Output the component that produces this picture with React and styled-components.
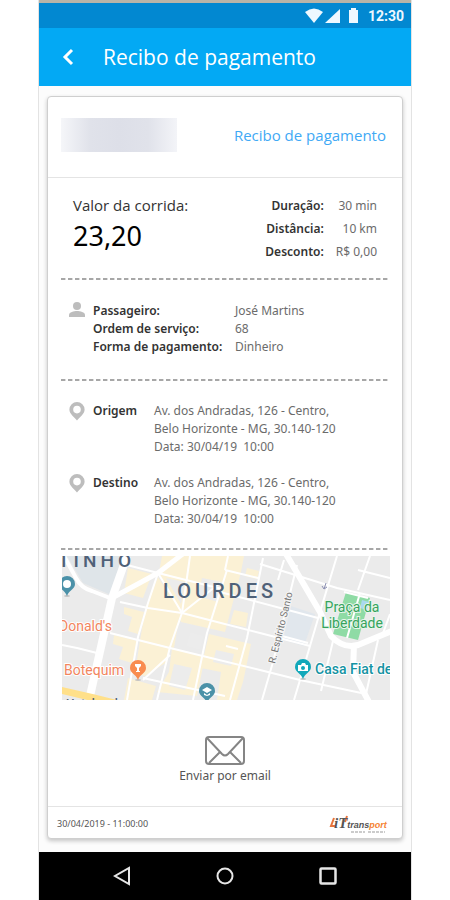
import React from "react";
import styled, { createGlobalStyle } from "styled-components";

const GlobalStyle = createGlobalStyle`
  * {
    box-sizing: border-box;
  }
  body {
    margin: 0;
    background: #ffffff;
    font-family: "Noto Sans", "Open Sans", sans-serif;
  }
  button {
    padding: 0;
    border: 0;
    background: none;
    font: inherit;
    cursor: pointer;
  }
  svg {
    display: block;
  }
`;

const Page = styled.div`
  min-height: 100vh;
  padding: 0 39px;
  display: flex;
`;

const Phone = styled.div`
  flex: 1;
  min-width: 0;
  display: flex;
  flex-direction: column;
  border-top: 3px solid #b9b4a8;
  background: #fcfcfc;
  box-shadow: 0 0 0 1px #e3e3e3;
`;

const StatusBar = styled.div`
  height: 25px;
  padding-right: 7px;
  display: flex;
  align-items: center;
  justify-content: flex-end;
  background: #0288d1;
  color: #eef8ff;
  font: bold 14px/24px Roboto, sans-serif;
`;

const StatusIcons = styled.svg`
  margin-right: 8px;
`;

const AppBar = styled.header`
  height: 58px;
  padding: 0 20px;
  display: flex;
  align-items: center;
  gap: 26px;
  background: #03a9f4;
  color: #ffffff;
`;

const AppTitle = styled.h1`
  margin: 0;
  font-family: "Open Sans", sans-serif;
  font-size: 21px;
  font-weight: 400;
  line-height: 28px;
`;

const BackButton = styled.button`
  width: 18px;
  height: 24px;
  display: flex;
  align-items: center;
  justify-content: center;
`;

const Card = styled.main`
  flex: 1;
  margin: 10px 8px 13px;
  display: flex;
  flex-direction: column;
  background: #ffffff;
  border: 1px solid #cfcfcf;
  border-radius: 4px;
  box-shadow: 0 2px 4px rgba(0, 0, 0, 0.22);
`;

const CardHeader = styled.div`
  height: 81px;
  padding: 0 16px 0 13px;
  display: flex;
  align-items: center;
  justify-content: space-between;
  border-bottom: 1px solid #e4e4e4;
`;

const HiddenName = styled.div`
  width: 116px;
  height: 34px;
  margin-bottom: 4px;
  background: linear-gradient(90deg, #f5f6f9, #e0e2ea 25%, #dddfe8 50%, #e0e2ea 75%, #f3f4f8);
`;

const CardTitle = styled.h2`
  margin: 0 0 4px;
  color: #3fa9f5;
  font-family: "Open Sans", sans-serif;
  font-size: 15px;
  font-weight: 400;
  line-height: 20px;
`;

const Section = styled.section`
  height: ${props => props.$height}px;
  margin: 0 13px;
  padding: ${props => props.$top}px 0 0 8px;
`;

const Divider = styled.svg`
  width: calc(100% - 26px);
  height: 2px;
  margin: 0 13px;
`;

const Summary = styled.div`
  display: flex;
  justify-content: space-between;
  padding: 0 12px 0 4px;
`;

const PriceLabel = styled.div`
  padding-top: 1px;
  color: #333333;
  font-family: "Open Sans", sans-serif;
  font-size: 15px;
  line-height: 20px;
`;

const Price = styled.div`
  color: #000000;
  font-size: 27px;
  line-height: 42px;
`;

const Details = styled.dl`
  margin: 0;
  display: grid;
  grid-template-columns: auto auto;
  column-gap: 12px;
  font-size: 12px;
  line-height: 23px;
  text-align: right;
`;

const Label = styled.dt`
  color: #333333;
  font-weight: 600;
`;

const Value = styled.dd`
  margin: 0;
  color: #6b6b6b;
`;

const IconRow = styled.div`
  display: flex;
  gap: 8px;
  font-size: 12px;
  line-height: 18px;
`;

const RowIcon = styled.svg`
  flex: none;
`;

const Passenger = styled.dl`
  margin: 0;
  display: grid;
  grid-template-columns: 132px auto;
  column-gap: 10px;
`;

const Place = styled(IconRow)`
  margin-bottom: 18px;
`;

const PlaceName = styled.strong`
  width: 53px;
  color: #333333;
  font-weight: 600;
`;

const Address = styled.div`
  color: #6b6b6b;
  white-space: pre-line;
`;

const Map = styled.svg`
  width: calc(100% - 26px);
  height: auto;
  margin: 6px 12px 0 14px;
  font-family: Roboto, sans-serif;
`;

const EmailArea = styled.div`
  flex: 1;
  display: flex;
  align-items: center;
  justify-content: center;
`;

const EmailButton = styled.button`
  padding-top: 14px;
  display: flex;
  flex-direction: column;
  align-items: center;
  gap: 2px;
  color: #555555;
  font-size: 12px;
  line-height: 18px;
`;

const CardFooter = styled.footer`
  height: 32px;
  padding: 2px 12px 0 9px;
  display: flex;
  align-items: center;
  justify-content: space-between;
  border-top: 1px solid #e4e4e4;
  color: #555555;
  font-size: 9px;
`;

const NavBar = styled.nav`
  height: 48px;
  padding: 0 31px;
  display: grid;
  grid-template-columns: repeat(3, 1fr);
  background: #000000;
`;

const NavButton = styled.button`
  display: flex;
  align-items: center;
  justify-content: center;
`;

const address = "Av. dos Andradas, 126 - Centro,\nBelo Horizonte - MG, 30.140-120";

const places = [
  { name: "Origem", address, date: "30/04/19 \u00a010:00" },
  { name: "Destino", address, date: "30/04/19 \u00a010:00" }
];

const details = [
  ["Duração:", "30 min"],
  ["Distância:", "10 km"],
  ["Desconto:", "R$ 0,00"]
];

const passenger = [
  ["Passageiro:", "José Martins"],
  ["Ordem de serviço:", "68"],
  ["Forma de pagamento:", "Dinheiro"]
];

const DashedLine = () => (
  <Divider aria-hidden="true">
    <line x1="0" y1="1" x2="100%" y2="1" stroke="#8a8a8a" strokeWidth="1.5" strokeDasharray="4.4 2.6" />
  </Divider>
);

const PinIcon = () => (
  <RowIcon width="16" height="20" viewBox="0 0 16 20" aria-hidden="true">
    <path
      fill="#bdbdbd"
      fillRule="evenodd"
      d="M8 0a7.6 7.6 0 0 0-7.600 7.600c0 4.700 5 7.500 7.600 10.900 2.600-3.400 7.600-6.200 7.600-10.900A7.600 7.600 0 0 0 8 0zm0 3.800a3.800 3.800 0 1 1 0 7.600 3.800 3.800 0 0 1 0-7.600z"
    />
  </RowIcon>
);

const MapPin = ({ x, y, color, children }) => (
  <g transform={`translate(${x} ${y})`}>
    <ellipse cx="0" cy="12" rx="3" ry="1" fill="#9e9e9e" opacity="0.5" />
    <path fill={color} d="M0-8a8 8 0 0 0-8 8c0 5 6 6 8 12 2-6 8-7 8-12a8 8 0 0 0-8-8z" />
    {children}
  </g>
);

const StreetMap = () => (
  <Map viewBox="0 0 328 144" role="img" aria-label="Mapa do trajeto">
    <defs>
      <clipPath id="map-area">
        <rect width="328" height="144" />
      </clipPath>
    </defs>
    <g clipPath="url(#map-area)">
      <rect width="328" height="144" fill="#ebebeb" />
      <path fill="#dfe5e9" d="M5 0h57L49 39 21 27z" />
      <path
        fill="#fbf1d5"
        d="M66 12l24 6-9 24-19-5zM100 0h82l-3 16-16 60-44-10-22-50zM96 21l22 35-6 36-34-8 6-34zM62 51l20 5-6 22-10-3 4-14-8-3zM185 12l12 3-2 8-12-3zM172 54l14 3-2 14-16-3zM147 78l42 10-8 38-6 18h-20l4-28-20-4zM52 79l24 6-6 22-13-4 4-12-10-3zM78 84l30 8-3 14-22 14-10-3zM110 92l33 8-8 40-40-4 12-20zM66 122l28 8-4 14H62z"
      />
      <path fill="#ececec" d="M104 22l19 4-4 22zM140 22l20 4-4 20-20-6zM128 76l14 4-4 14-14-4zM112 108l18 4-7 22-16-4zM154 94l18 4-3 12-18-4z" />
      <path fill="#e1e7ed" d="M229 50l24 8-11 32-21-6z" />
      <path fill="#8fdba5" d="M284 36l24 6-12 42-25-6z" />
      <path fill="#a9d9ee" d="M300 44l7 2-2 8-7-2z" />
      <g fill="none" stroke="#ffffff" strokeWidth="2" strokeLinejoin="round">
        <path d="M65 9l31 8 64 16M96 17l24 40M58 46l28 6 34 5 78 20 50 13M48 77l60 15 90 22 40 10 66 14" />
        <path d="M0 89l15 3 20 5M81 122l82 18M96 17L86 47 76 81 65 144M128 0l-8 57-12 34-13 53M165 14l-20 63-14 67M158 27l-38 30M108 99l-27 25" />
        <path d="M163 14l33 8M201 2l-16 80-17 62M235 9l-24 97-11 38M275 0l-17 56-20 68-6 20" />
        <path d="M166 0l-3 14M164 90l12 3M158 36l98 26M198 8l77 24 53 12M308 0l-12 34M296 14l32 8M222 4l-6 20M271 85l-12 50M316 84l-12 54" />
        <path d="M220 80l26 7M328 58l-8 22M306 42l-24-6M298 37l-13 45" />
      </g>
      <g fill="none" stroke="#ffffff" strokeLinejoin="round">
        <path strokeWidth="8" d="M65 0L50 42 28 140" />
        <path strokeWidth="5" d="M50 42l46-25 26-20" />
        <path strokeWidth="4" d="M2 0l12 22q5 10 16 13l18 7" />
        <path strokeWidth="6" d="M224-2l34 58 11 24q12 13 27 9l34-14M292 88l-1 28 16 30" />
      </g>
      <path fill="none" stroke="#ffe08a" strokeWidth="7" d="M-2 134l34 8 20 5" />
      <g fontWeight="500" fill="#4f6178">
        <text x="-4" y="11" fontSize="19" letterSpacing="4">TINHO</text>
        <text x="101" y="42" fontSize="20" letterSpacing="4">LOURDES</text>
        <text x="4" y="152" fontSize="12">Hotel and</text>
      </g>
      <g fontSize="14" fill="#f2855e" stroke="#ffffff" strokeWidth="2" paintOrder="stroke">
        <text x="-3" y="75">Donald's</text>
        <text x="2" y="119">Botequim</text>
      </g>
      <text
        transform="translate(213 108) rotate(-76)"
        fontSize="10"
        fill="#757575"
        stroke="#f5f5f5"
        strokeWidth="2"
        paintOrder="stroke"
      >
        R. Espírito Santo
      </text>
      <g
        fontSize="14"
        fill="#36a45c"
        textAnchor="middle"
        stroke="#e8f5ec"
        strokeWidth="2"
        paintOrder="stroke"
      >
        <text x="290" y="56">Praça da</text>
        <text x="290" y="72">Liberdade</text>
      </g>
      <text
        x="253"
        y="118"
        fontSize="14"
        fontWeight="500"
        fill="#1593a3"
        stroke="#ffffff"
        strokeWidth="2"
        paintOrder="stroke"
      >
        Casa Fiat de
      </text>
      <path fill="none" stroke="#8d91b5" strokeWidth="1" d="M264 27l-2 6m-2-3l2 3 3-2" />
      <MapPin x={5} y={28} color="#4b91a8">
        <circle r="4" fill="#ffffff" />
      </MapPin>
      <MapPin x={76} y={112} color="#f98c4f">
        <path fill="#ffffff" d="M-3-4h6v2L1 0v3h1v1h-4V3h1V0l-2-2z" />
      </MapPin>
      <MapPin x={145} y={135} color="#4b91a8">
        <path fill="#ffffff" d="M0-4l5 3-5 3-5-3zM-3 2l3 2 3-2v2L0 5l-3-1z" />
      </MapPin>
      <MapPin x={241} y={111} color="#12a8ba">
        <path fill="#ffffff" d="M-5-2h3l1-2h3l1 2h2v6H-5z" />
        <circle cx="0" cy="1" r="2" fill="#12a8ba" />
      </MapPin>
    </g>
  </Map>
);

const Logo = () => (
  <svg width="62" height="24" viewBox="0 0 62 24" role="img" aria-label="iTransport">
    <path fill="none" stroke="#e8743b" strokeWidth="2" d="M6 6L3 14h4M19 4l-2 6" />
    <g fontFamily="Liberation Sans, sans-serif" fontStyle="italic" fontWeight="bold" fill="#555555">
      <text x="6" y="16">
        <tspan fontFamily="Liberation Serif, serif" fontSize="15">iT</tspan>
        <tspan fontSize="9">
          trans
        </tspan>
        <tspan fontSize="9" fill="#f58232">
          port
        </tspan>
      </text>
    </g>
    <path stroke="#999999" strokeWidth="1" strokeDasharray="3 1" d="M23 20h14M40 20h17" />
  </svg>
);

const App = () => (
  <>
    <GlobalStyle />
    <Page>
      <Phone>
        <StatusBar>
          <StatusIcons width="55" height="18" viewBox="0 0 55 18" fill="#eef8ff" aria-hidden="true">
            <path d="M0 5q9-7 18 0L9 16z" />
            <path d="M35 2v14H20z" />
            <path d="M44 3h2V1h5v2h2v13h-9z" />
          </StatusIcons>
          12:30
        </StatusBar>
        <AppBar>
          <BackButton aria-label="Voltar">
            <svg width="12" height="18" viewBox="0 0 12 18" fill="none" stroke="#ffffff" strokeWidth="3">
              <path d="M10 2L3 9l7 7" />
            </svg>
          </BackButton>
          <AppTitle>Recibo de pagamento</AppTitle>
        </AppBar>

        <Card>
          <CardHeader>
            <HiddenName />
            <CardTitle>Recibo de pagamento</CardTitle>
          </CardHeader>

          <Section $height={100} $top={16}>
            <Summary>
              <div>
                <PriceLabel>Valor da corrida:</PriceLabel>
                <Price>23,20</Price>
              </div>
              <Details>
                {details.map(([label, value]) => (
                  <React.Fragment key={label}>
                    <Label>{label}</Label>
                    <Value>{value}</Value>
                  </React.Fragment>
                ))}
              </Details>
            </Summary>
          </Section>
          <DashedLine />

          <Section $height={99} $top={22}>
            <IconRow>
              <RowIcon width="16" height="18" viewBox="0 0 16 18" fill="#bdbdbd" aria-hidden="true">
                <circle cx="8" cy="4" r="4" />
                <path d="M0 15v-2c0-3 5-4 8-4s8 1 8 4v2z" />
              </RowIcon>
              <Passenger>
                {passenger.map(([label, value]) => (
                  <React.Fragment key={label}>
                    <Label>{label}</Label>
                    <Value>{value}</Value>
                  </React.Fragment>
                ))}
              </Passenger>
            </IconRow>
          </Section>
          <DashedLine />

          <Section $height={167} $top={21}>
            {places.map(place => (
              <Place key={place.name}>
                <PinIcon />
                <PlaceName>{place.name}</PlaceName>
                <Address>
                  {place.address}
                  {"\n"}Data: {place.date}
                </Address>
              </Place>
            ))}
          </Section>
          <DashedLine />

          <StreetMap />

          <EmailArea>
            <EmailButton>
              <svg width="40" height="29" viewBox="0 0 40 29" fill="none" stroke="#858585" strokeWidth="2" aria-hidden="true">
                <rect x="1" y="1" width="38" height="27" rx="3" />
                <path d="M2 2l15 16q3 3 6 0L38 2M4 27l11-11M36 27L25 16" />
              </svg>
              Enviar por email
            </EmailButton>
          </EmailArea>

          <CardFooter>
            <time>30/04/2019 - 11:00:00</time>
            <Logo />
          </CardFooter>
        </Card>

        <NavBar>
          <NavButton aria-label="Voltar">
            <svg width="18" height="20" viewBox="0 0 18 20" fill="none" stroke="#e6e6e6" strokeWidth="2">
              <path d="M16 2v16L2 10z" />
            </svg>
          </NavButton>
          <NavButton aria-label="Início">
            <svg width="18" height="18" viewBox="0 0 18 18" fill="none" stroke="#e6e6e6" strokeWidth="2">
              <circle cx="9" cy="9" r="7.500" />
            </svg>
          </NavButton>
          <NavButton aria-label="Recentes">
            <svg width="18" height="18" viewBox="0 0 18 18" fill="none" stroke="#e6e6e6" strokeWidth="2.500">
              <rect x="1.500" y="1.500" width="15" height="15" rx="1" />
            </svg>
          </NavButton>
        </NavBar>
      </Phone>
    </Page>
  </>
);

export default App;
